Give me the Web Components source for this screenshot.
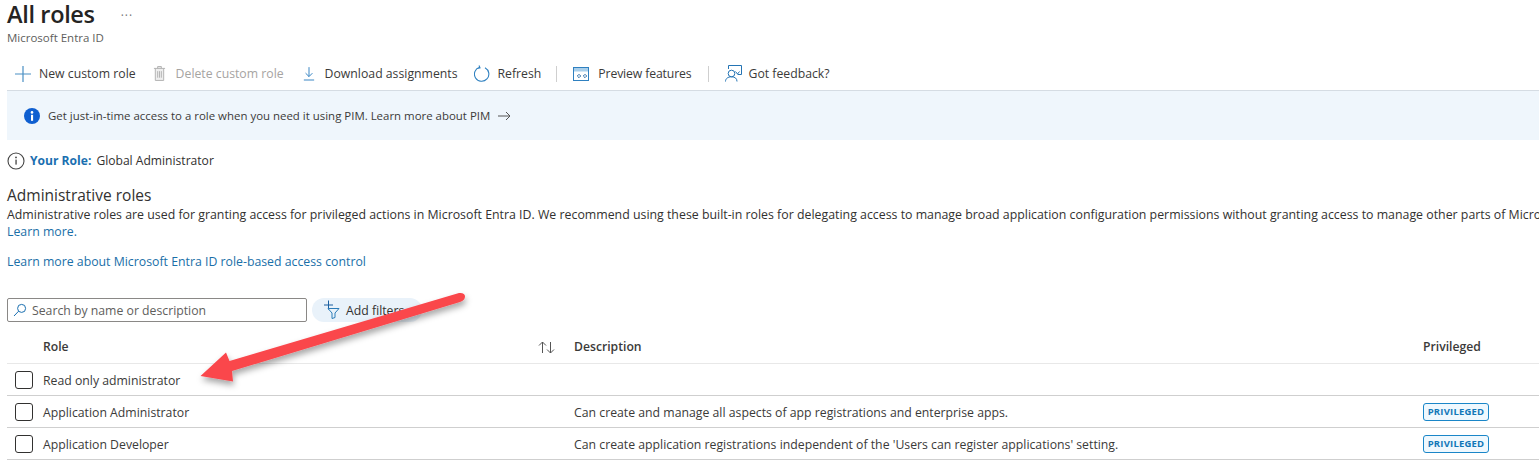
<!DOCTYPE html>
<html lang="en"><head><meta charset="utf-8"><title>All roles</title>
<style>
html,body{margin:0;padding:0;background:#fff;overflow:hidden}
body{font:12.25px/16px "Open Sans","Noto Sans",sans-serif;color:#323130;width:1539px;height:466px;position:relative}
</style></head><body>
<roles-page></roles-page>
<script>
const def=(name,html)=>customElements.define(name,class extends HTMLElement{constructor(){super();this.attachShadow({mode:'open'}).innerHTML=html}});
def('page-title',`<style>:host{display:block;padding-left:7px;height:57px}
.t{display:flex;align-items:center;height:28px}
h1{margin:0;font-size:23.500px;line-height:28px;font-weight:600;color:#252423;letter-spacing:-.35px}
.d{margin-left:26px;font-size:12px;color:#777;letter-spacing:1px;position:relative;top:2px}
.s{font-size:11.500px;line-height:16px;color:#605e5c;margin-top:2px}</style>
<div class="t"><h1>All roles</h1><span class="d">···</span></div><div class="s">Microsoft Entra ID</div>`);
def('tool-btn',`<style>:host{display:inline-flex;align-items:center;gap:8px;white-space:nowrap;height:20px;color:#3b3a39}
:host([disabled]){color:#a6a4a2}::slotted(svg){flex:none;display:block}</style><slot name="i"></slot><slot></slot>`);
def('tool-bar',`<style>:host{display:flex;align-items:center;height:33px;padding:0 0 0 8px;margin-left:7px;border-bottom:1px solid #d5dce3}</style><slot></slot>`);
def('tool-sep',`<style>:host{display:block;width:1px;height:16px;background:#cfcfcf}</style>`);
def('pim-banner',`<style>:host{display:flex;align-items:center;height:49px;box-sizing:border-box;padding-top:1px;margin-left:7px;padding-left:17px;gap:8px;background:#eff6fc;color:#3b3a39;font-size:11.450px;white-space:nowrap}
svg{display:block;flex:none}</style>
<svg width="16" height="16" viewBox="0 0 16 16"><circle cx="8" cy="8" r="8" fill="#0f5fd0"/><rect x="7" y="6.800" width="2.100" height="6" fill="#fff"/><circle cx="8" cy="4.400" r="1.300" fill="#fff"/></svg>
<span>Get just-in-time access to a role when you need it using PIM. Learn more about PIM</span>
<svg width="13" height="10" viewBox="0 0 13 10" fill="none" stroke="#555" stroke-width="1"><path d="M0 5h12M8 1l4 4-4 4"/></svg>`);
def('your-role',`<style>:host{display:flex;align-items:center;height:20px;padding-left:7px;margin-top:11px;gap:5px;font-size:12.100px;white-space:nowrap}
b{color:#1a6fb0;font-weight:700;margin-right:5px}svg{display:block}</style>
<svg width="18" height="18" viewBox="0 0 18 18" fill="none"><circle cx="9" cy="9" r="8" stroke="#444" stroke-width="1.100"/><rect x="8.400" y="7.600" width="1.300" height="5" fill="#444"/><circle cx="9" cy="5.400" r=".9" fill="#444"/></svg>
<span><b>Your Role:</b>Global Administrator</span>`);
def('admin-intro',`<style>:host{display:block;padding-left:7px;margin-top:14px;white-space:nowrap;overflow:hidden}
h2{margin:0;font-size:15.500px;line-height:20px;font-weight:400;color:#323130}
p{margin:0;line-height:17px;color:#323130;font-size:12.350px;padding-top:1px}a{color:#1a6fa8;text-decoration:none;display:block;font-size:12.300px;line-height:17px}
.l{margin-top:13px}</style>
<h2>Administrative roles</h2>
<p>Administrative roles are used for granting access for privileged actions in Microsoft Entra ID. We recommend using these built-in roles for delegating access to manage broad application configuration permissions without granting access to manage other parts of Microsoft</p>
<a href="#">Learn more.</a><a class="l" href="#">Learn more about Microsoft Entra ID role-based access control</a>`);
def('filter-bar',`<style>:host{display:flex;align-items:center;gap:5px;height:24px;padding-left:7px;margin-top:28px}
.s{box-sizing:border-box;width:300px;height:24px;border:1px solid #8a8886;border-radius:2px;display:flex;align-items:center;gap:5px;padding-left:5px;color:#605e5c;white-space:nowrap}
.f{display:flex;align-items:center;gap:3px;height:24px;width:110px;box-sizing:border-box;padding-left:11px;background:#e9f2fa;border-radius:12px;color:#323130;white-space:nowrap}
span{padding-top:1px}svg{display:block;flex:none}</style>
<div class="s"><svg width="14" height="14" viewBox="0 0 14 14" fill="none" stroke="#1a6fb0"><circle cx="8.600" cy="5.400" r="4"/><path d="M5.600 8.200L1 13"/></svg><span>Search by name or description</span></div>
<div class="f"><svg width="20" height="20" viewBox="0 0 20 20" fill="none" stroke="#1a5fa0"><path d="M1 5h9M5.500 .5v9"/><path d="M5 8.500h11L12 13v4.500l-3 1V13z" stroke="#2b7cb8"/></svg><span>Add filters</span></div>`);
def('role-row',`<style>:host{display:grid;grid-template-columns:36px 531px 849px 1fr;align-items:center;height:32px;margin-left:7px;border-bottom:1px solid #cfcfcf;box-sizing:border-box;white-space:nowrap;color:#3b3a39}
:host([head]){height:35px;border-bottom-color:#e8e8e8;font-weight:600;font-size:12.200px}
.c{padding-left:8px}.c i{display:block;box-sizing:border-box;width:18px;height:18px;border:1px solid #323130;border-radius:3px}
:host([head]) i{display:none}
.r{display:flex;justify-content:space-between;padding-right:19px;align-items:center}
.x,.r{padding-top:3px}:host([head]) .x,:host([head]) .r,:host([head]) .p{padding-top:2px}
.x{font-size:12.280px}:host([head]) .x{font-size:12.200px}</style>
<div class="c"><i></i></div><div class="r"><slot name="role"></slot><slot name="sort"></slot></div><div class="x"><slot name="desc"></slot></div><div class="p"><slot name="priv"></slot></div>`);
def('priv-badge',`<style>:host{display:inline-flex;align-items:center;justify-content:center;box-sizing:border-box;width:66px;height:18px;border:1px solid #1a86c8;border-radius:3px;background:#eff8fe;color:#1277b8;font-size:9.500px;font-weight:700;letter-spacing:.2px;vertical-align:top}</style>PRIVILEGED`);
def('red-arrow',`<style>:host{position:absolute;left:190px;top:285px;display:block;pointer-events:none}svg{display:block;overflow:visible}</style>
<svg width="290" height="110" viewBox="190 285 290 110"><defs><filter id="s" x="-10%" y="-20%" width="125%" height="150%"><feDropShadow dx="1" dy="4" stdDeviation="3" flood-color="#000" flood-opacity=".35"/></filter></defs>
<path filter="url(#s)" fill="#fa464c" d="M200.500 376 L226 352.500 L229.500 361 L459 293 Q465 292.500 465 296.500 Q465 300 460 302 L232 371 L233 381.500 Z"/></svg>`);
def('roles-page',`<style>:host{display:block}svg{display:block}</style>
<page-title></page-title>
<tool-bar>
<tool-btn style="margin-right:17px"><svg slot="i" width="16" height="16" viewBox="0 0 16 16" stroke="#4a8fc4" stroke-width="1.200"><path d="M8 0v16M0 8h16"/></svg>New custom role</tool-btn>
<tool-btn disabled style="margin-right:19px;gap:10px"><svg slot="i" width="13" height="17" viewBox="0 0 14 17" fill="#eee" stroke="#b0b0b0"><path d="M1 3h12M5 3V1h4v2M2.500 3v13h9V3M5 6v7M7 6v7M9 6v7"/></svg>Delete custom role</tool-btn>
<tool-btn style="margin-right:16px;gap:10px"><svg slot="i" width="12" height="16" viewBox="0 0 14 16" fill="none" stroke="#2f80c0" stroke-width="1.100"><path d="M7 0v11M3 7l4 4 4-4M1 15h12"/></svg>Download assignments</tool-btn>
<tool-btn style="margin-right:15px"><svg slot="i" width="16" height="17" viewBox="0 0 16 17" fill="none" stroke="#2f80c0" stroke-width="1.100"><path d="M5.500 2.200A7.200 7.200 0 1 0 11 2.700M5 .5l1 2.300-2.600.6"/></svg>Refresh</tool-btn>
<tool-sep style="margin-right:16px"></tool-sep>
<tool-btn style="margin-right:16px;gap:9px;letter-spacing:-.14px"><svg slot="i" width="16" height="14" viewBox="0 0 16 14" fill="none"><rect x=".5" y=".5" width="15" height="13" stroke="#2f80c0" fill="#fff"/><rect x="1" y="1" width="14" height="3.500" fill="#a9cfeb"/><path d="M6 7.300l1.700 1.700L6 10.700 4.300 9zM12 7.300l1.700 1.700-1.700 1.700L10.300 9z" stroke="#2f6fa8"/></svg>Preview features</tool-btn>
<tool-sep style="margin-right:16px"></tool-sep>
<tool-btn style="gap:7px"><svg slot="i" width="17" height="17" viewBox="0 0 17 17" fill="none" stroke="#2474b4"><path d="M3.500 4V.5h13v9h-4"/><circle cx="6.500" cy="8.500" r="3.300"/><path d="M.5 16.500c0-3 2.500-4.700 6-4.700s5.500 1.700 5.500 4.700M10.500 6.500l2 2.500 2-2.500"/></svg>Got feedback?</tool-btn>
</tool-bar>
<pim-banner></pim-banner>
<your-role></your-role>
<admin-intro></admin-intro>
<filter-bar></filter-bar>
<role-row head style="margin-top:7px"><span slot="role">Role</span><svg slot="sort" width="17" height="13" viewBox="0 0 17 13" fill="none" stroke="#555"><path d="M4.500 12V1M1 4.500L4.500 1 8 4.500M12.500 1v11M9 8.500l3.500 3.500 3.500-3.500"/></svg><span slot="desc">Description</span><span slot="priv">Privileged</span></role-row>
<role-row><span slot="role">Read only administrator</span></role-row>
<role-row><span slot="role">Application Administrator</span><span slot="desc">Can create and manage all aspects of app registrations and enterprise apps.</span><priv-badge slot="priv"></priv-badge></role-row>
<role-row><span slot="role">Application Developer</span><span slot="desc">Can create application registrations independent of the 'Users can register applications' setting.</span><priv-badge slot="priv"></priv-badge></role-row>
<red-arrow></red-arrow>`);
</script></body></html>
